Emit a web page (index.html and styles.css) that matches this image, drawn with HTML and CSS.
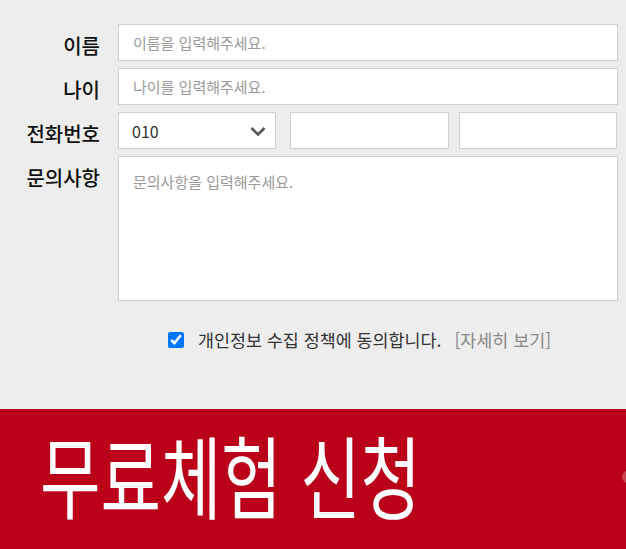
FILE: index.html
```html
<!DOCTYPE html>
<html lang="ko">
<head>
    <meta charset="UTF-8">
    <meta name="viewport" content="width=device-width, initial-scale=1.0">
    <title>무료체험 신청</title>
    <link rel="stylesheet" href="styles.css">
</head>
<body>

<!-- Inquiry Form -->
<form class="apply-form" action="#" method="post">
    <div class="form-row">
        <label class="form-label" for="name">이름</label>
        <input class="form-input" type="text" id="name" name="name" placeholder="이름을 입력해주세요.">
    </div>

    <div class="form-row">
        <label class="form-label" for="age">나이</label>
        <input class="form-input" type="text" id="age" name="age" placeholder="나이를 입력해주세요.">
    </div>

    <div class="form-row">
        <label class="form-label" for="phone1">전화번호</label>
        <div class="phone-group">
            <div class="select-wrap">
                <select class="form-select" id="phone1" name="phone1">
                    <option value="010">010</option>
                    <option value="011">011</option>
                    <option value="016">016</option>
                    <option value="017">017</option>
                </select>
                <svg class="select-arrow" width="16" height="10" viewBox="0 0 16 10">
                    <polyline points="1.5,2 8,8.5 14.5,2" fill="none" stroke="#555" stroke-width="2.6"/>
                </svg>
            </div>
            <input class="form-input phone-mid" type="text" name="phone2">
            <input class="form-input phone-last" type="text" name="phone3">
        </div>
    </div>

    <div class="form-row">
        <label class="form-label" for="message">문의사항</label>
        <textarea class="form-textarea" id="message" name="message" placeholder="문의사항을 입력해주세요."></textarea>
    </div>

    <div class="agree-row">
        <input class="agree-check" type="checkbox" id="agree" name="agree" checked>
        <label for="agree">개인정보 수집 정책에 동의합니다.</label>
        <a class="agree-more" href="#">[자세히 보기]</a>
    </div>
</form>

<!-- Submit Banner -->
<div class="apply-banner">
    <span class="banner-text">무료체험 신청</span>
    <span class="banner-dot"></span>
</div>

</body>
</html>
```

FILE: styles.css
```css
body { margin: 0; background: #ededed; font-family: "Noto Sans CJK KR", "Noto Sans", sans-serif; color: #222; overflow: hidden; }

.apply-form { padding: 24px 8px 0 0; height: 409px; box-sizing: border-box; }
.form-row { display: flex; align-items: flex-start; margin-bottom: 7px; }
.form-label { width: 100px; flex-shrink: 0; text-align: right; margin-right: 18px; padding-top: 6px; font-size: 20px; font-weight: 500; line-height: 31px; color: #111; }

.form-input, .form-select, .form-textarea { box-sizing: border-box; border: 1px solid #cfcfcf; background: #fff; font-family: inherit; outline: none; border-radius: 0; }
.form-input { flex: 1; height: 37px; padding: 0 14px; font-size: 15px; }
.form-input::placeholder, .form-textarea::placeholder { color: #9a9a9a; }

.phone-group { flex: 1; display: flex; }
.select-wrap { position: relative; width: 158px; }
.form-select { width: 100%; height: 37px; padding: 0 13px; font-size: 16px; color: #333; appearance: none; -webkit-appearance: none; }
.select-arrow { position: absolute; right: 10px; top: 14px; }
.phone-mid { flex: none; width: 159px; margin-left: 14px; }
.phone-last { flex: none; width: 158px; margin-left: 10px; }

.form-textarea { flex: 1; height: 145px; padding: 14px 14px; font-size: 15px; resize: none; }

.agree-row { display: flex; align-items: center; padding-left: 168px; margin-top: 26px; font-size: 17.4px; color: #333; }
.agree-check { width: 16px; height: 16px; margin: 0 14px 0 0; accent-color: #0075ff; }
.agree-more { margin-left: 13px; color: #888; text-decoration: none; }

.apply-banner { position: relative; height: 140px; background: #bb0019; overflow: hidden; }
.banner-text { display: inline-block; margin: 14px 0 0 40px; color: #fff; font-size: 90px; line-height: 100px; font-weight: 400; transform: scaleX(0.73); transform-origin: left center; white-space: nowrap; }
.banner-dot { position: absolute; right: -8px; top: 62px; width: 12px; height: 12px; border-radius: 50%; background: #c8444f; }
```
